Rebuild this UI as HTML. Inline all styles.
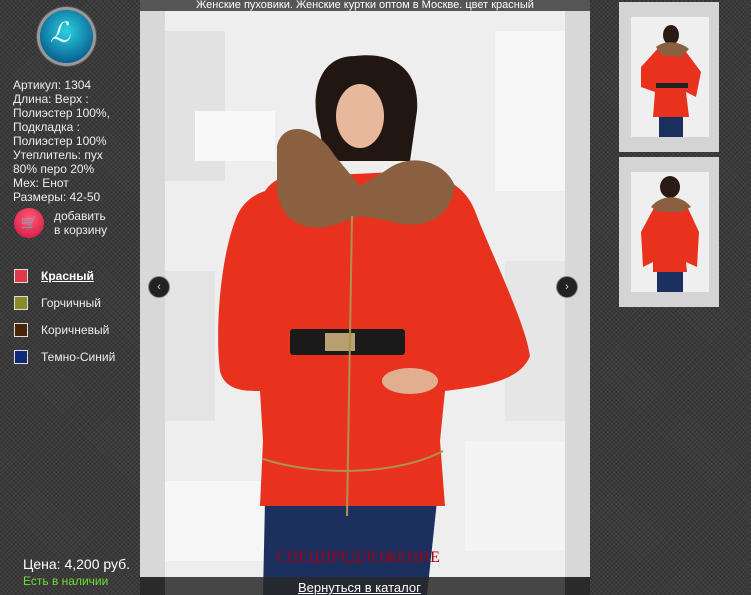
<!DOCTYPE html>
<html><head><meta charset="utf-8"><style>
html,body{margin:0;padding:0;width:751px;height:595px;overflow:hidden;background:#3b3b3b;font-family:"Liberation Sans",sans-serif}
body{background-color:#3a3a3a;background-image:repeating-linear-gradient(45deg,rgba(0,0,0,.18) 0 1px,transparent 1px 3px),repeating-linear-gradient(-45deg,rgba(255,255,255,.06) 0 1px,transparent 1px 3px)}
.abs{position:absolute}
.info{left:13px;top:78px;color:#eee;font-size:12px;line-height:14px}
.col{left:14px;font-size:12px;color:#eee}
.col i{position:absolute;left:0;top:0;width:14px;height:14px;border:1px solid #ddd;box-sizing:border-box}
.col span{position:absolute;left:27px;top:0;white-space:nowrap}
</style></head><body>
<div class="abs" style="left:40px;top:10px;width:53px;height:53px;border-radius:50%;background:radial-gradient(circle at 50% 40%,#2bd0e0,#0a6a9a 70%,#0b3d5c);box-shadow:0 0 0 3px #999,0 0 0 4px #555"></div>
<div class="abs" style="left:50px;top:16px;color:#e8f8ff;font:italic 28px 'Liberation Serif',serif">ℒ</div>
<div class="abs info">Артикул: 1304<br>Длина: Верх :<br>Полиэстер 100%,<br>Подкладка :<br>Полиэстер 100%<br>Утеплитель: пух<br>80% перо 20%<br>Мех: Енот<br>Размеры: 42-50</div>
<div class="abs" style="left:14px;top:208px;width:30px;height:30px;border-radius:50%;background:radial-gradient(circle at 50% 35%,#ff5a7a,#d4103a)"></div>
<div class="abs" style="left:21px;top:215px;color:#fff;font-size:13px">🛒</div>
<div class="abs" style="left:54px;top:209px;color:#eee;font-size:12px;line-height:14px">добавить<br>в корзину</div>
<div class="abs col" style="top:269px"><i style="background:#e03a4a"></i><span style="font-weight:bold;text-decoration:underline;color:#fff">Красный</span></div>
<div class="abs col" style="top:296px"><i style="background:#8a8a2a"></i><span>Горчичный</span></div>
<div class="abs col" style="top:323px"><i style="background:#4a2408"></i><span>Коричневый</span></div>
<div class="abs col" style="top:350px"><i style="background:#10287a"></i><span>Темно-Синий</span></div>
<div class="abs" style="left:23px;top:556px;color:#fff;font-size:14px">Цена: 4,200 руб.</div>
<div class="abs" style="left:23px;top:574px;color:#6fe030;font-size:12px">Есть в наличии</div>

<div class="abs" style="left:140px;top:0;width:450px;height:11px;background:#555;color:#fff;font-size:11px;line-height:11px;text-align:center;overflow:hidden">Женские пуховики. Женские куртки оптом в Москве. цвет красный</div>
<div class="abs" style="left:140px;top:11px;width:450px;height:566px;background:#d8d8d8"></div>
<svg class="abs" style="left:165px;top:11px" width="400" height="584" viewBox="0 0 400 584">
<rect width="400" height="584" fill="#eeeeee"/>
<rect x="0" y="20" width="60" height="150" fill="#e2e2e2"/><rect x="330" y="20" width="70" height="160" fill="#f6f6f6"/>
<rect x="0" y="260" width="50" height="150" fill="#e4e4e4"/><rect x="340" y="250" width="60" height="160" fill="#e6e6e6"/>
<rect x="30" y="100" width="80" height="50" fill="#f8f8f8"/><rect x="300" y="430" width="100" height="110" fill="#f4f4f4"/>
<rect x="0" y="470" width="100" height="80" fill="#f6f6f6"/>
<path d="M100 490 L98 584 L262 584 L272 490 Z" fill="#1c3060"/>
<path d="M190 45 C150 45 145 90 155 120 L160 150 L245 150 L252 100 C255 60 230 40 190 45Z" fill="#221613"/>
<ellipse cx="195" cy="105" rx="24" ry="32" fill="#e7b89c"/>
<path d="M100 180 C110 165 130 160 150 165 L250 160 C280 165 300 175 310 200 C325 240 360 310 365 345 C355 370 320 375 280 380 L275 430 L280 495 L95 495 L98 430 L95 380 C80 380 60 380 55 360 C50 320 55 250 70 210 C75 195 85 185 100 180Z" fill="#e8321e"/>
<path d="M112 135 C118 110 150 112 170 145 L195 175 L220 160 C245 140 280 150 290 175 C285 210 255 220 225 210 L195 205 L165 215 C135 222 110 205 112 170Z" fill="#8a6040"/>
<rect x="125" y="318" width="115" height="26" rx="3" fill="#1a1a1a"/>
<rect x="160" y="322" width="30" height="18" fill="#b8a070"/>
<ellipse cx="245" cy="370" rx="28" ry="13" fill="#e2ae90"/>
<line x1="187" y1="205" x2="182" y2="505" stroke="#b09050" stroke-width="2"/>
<path d="M98 448 C150 465 230 465 278 440" stroke="#b09050" stroke-width="2" fill="none"/>
<text x="193" y="551" text-anchor="middle" font-family="Liberation Serif,serif" font-size="16" fill="#a00010">СПЕЦПРЕДЛОЖЕНИЕ</text>
</svg>
<div class="abs" style="left:148px;top:276px;width:20px;height:20px;border-radius:50%;background:#222;border:1px solid #888;color:#ddd;font-size:11px;line-height:20px;text-align:center">‹</div>
<div class="abs" style="left:556px;top:276px;width:20px;height:20px;border-radius:50%;background:#222;border:1px solid #888;color:#ddd;font-size:11px;line-height:20px;text-align:center">›</div>
<div class="abs" style="left:140px;top:577px;width:450px;height:18px;background:rgba(40,40,40,.85)"></div>
<div class="abs" style="left:298px;top:580px;color:#fff;font-size:13px;text-decoration:underline">Вернуться в каталог</div>

<div class="abs" style="left:619px;top:2px;width:100px;height:150px;background:#d4d4d4"></div>
<svg class="abs" style="left:631px;top:17px" width="78" height="120"><rect width="78" height="120" fill="#efefef"/><rect x="28" y="95" width="24" height="25" fill="#1c3060"/><path d="M10 50 L30 28 L50 28 L70 55 L65 80 L55 75 L58 100 L22 100 L24 75 L10 70Z" fill="#e8321e"/><ellipse cx="40" cy="18" rx="8" ry="10" fill="#2a1a14"/><path d="M25 30 C35 22 50 25 58 32 L50 40 L30 38Z" fill="#8a6040"/><rect x="25" y="66" width="32" height="5" fill="#222"/></svg>
<div class="abs" style="left:619px;top:157px;width:100px;height:150px;background:#d4d4d4"></div>
<svg class="abs" style="left:631px;top:172px" width="78" height="120"><rect width="78" height="120" fill="#efefef"/><rect x="26" y="95" width="26" height="25" fill="#1c3060"/><path d="M10 60 L25 32 L55 32 L68 60 L66 95 L55 90 L56 100 L22 100 L22 90 L12 95Z" fill="#e8321e"/><ellipse cx="39" cy="15" rx="10" ry="11" fill="#2a1a14"/><path d="M20 35 C30 22 50 22 60 35 L50 40 L28 40Z" fill="#8a6040"/></svg>
</body></html>
